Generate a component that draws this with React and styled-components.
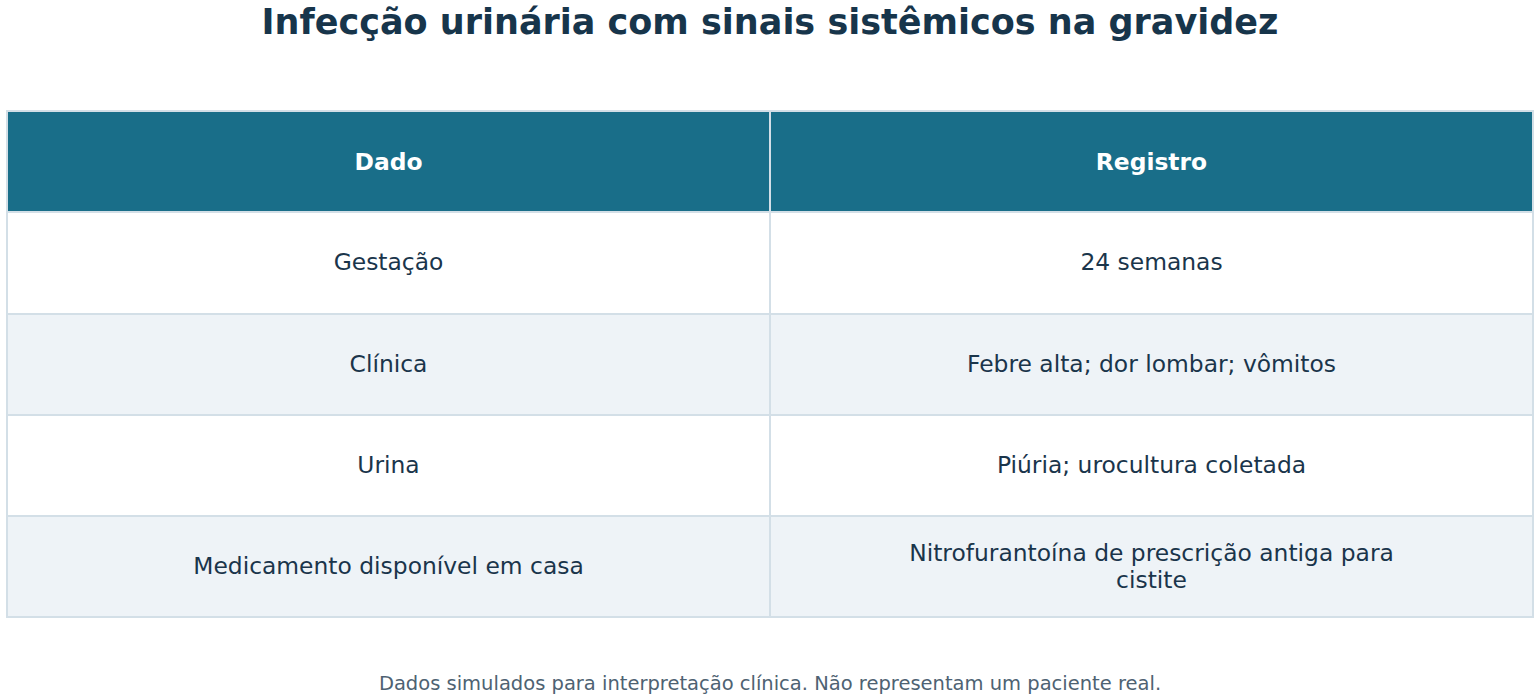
import React from "react";
import styled, { createGlobalStyle } from "styled-components";

const Global = createGlobalStyle`
  html, body { margin: 0; padding: 0; background: #ffffff; }
  body { font-family: "DejaVu Sans", "Liberation Sans", sans-serif; }
`;

const Page = styled.div`
  width: 1540px;
  padding: 0 6px;
  box-sizing: border-box;
  display: flex;
  flex-direction: column;
  align-items: stretch;
`;

const Title = styled.h1`
  margin: 0;
  height: 110px;
  font-size: 35px;
  line-height: 44px;
  font-weight: bold;
  color: #17354b;
  text-align: center;
`;

const Table = styled.table`
  width: 100%;
  border-collapse: collapse;
  table-layout: fixed;
  border: 2px solid #d3dfe7;
`;

const HeadCell = styled.th`
  height: 99.3px;
  padding: 0 120px;
  background: #196e89;
  color: #ffffff;
  font-size: 23.4px;
  font-weight: bold;
  text-align: center;
  border: 2px solid #d3dfe7;
`;

const Row = styled.tr`
  background: ${(p) => (p.$alt ? "#eef3f7" : "#ffffff")};
`;

const Cell = styled.td`
  height: 99.3px;
  padding: 0 120px;
  color: #1a354b;
  font-size: 23.4px;
  line-height: 27px;
  text-align: center;
  border: 2px solid #d3dfe7;
`;

const Footer = styled.p`
  margin: 53px 0 0;
  font-size: 19.5px;
  line-height: 26px;
  color: #4e6272;
  text-align: center;
`;

const rows = [
  ["Gestação", "24 semanas"],
  ["Clínica", "Febre alta; dor lombar; vômitos"],
  ["Urina", "Piúria; urocultura coletada"],
  ["Medicamento disponível em casa", "Nitrofurantoína de prescrição antiga para cistite"],
];

export default function App() {
  return (
    <>
      <Global />
      <Page>
        <Title>Infecção urinária com sinais sistêmicos na gravidez</Title>
        <Table>
          <thead>
            <tr>
              <HeadCell>Dado</HeadCell>
              <HeadCell>Registro</HeadCell>
            </tr>
          </thead>
          <tbody>
            {rows.map((r, i) => (
              <Row key={i} $alt={i % 2 === 1}>
                <Cell>{r[0]}</Cell>
                <Cell>{r[1]}</Cell>
              </Row>
            ))}
          </tbody>
        </Table>
        <Footer>Dados simulados para interpretação clínica. Não representam um paciente real.</Footer>
      </Page>
    </>
  );
}
